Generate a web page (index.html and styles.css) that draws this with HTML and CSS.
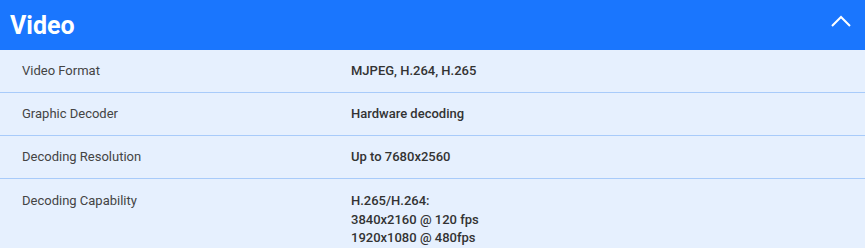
FILE: index.html
```html
<!DOCTYPE html>
<html lang="en">

<head>
    <meta charset="UTF-8">
    <title>Specifications - Video</title>
    <link rel="stylesheet" href="styles.css">
</head>

<body>
    <section class="spec">
        <div class="spec-header">
            <h2>Video</h2>
            <svg class="toggle" width="20" height="12" viewBox="0 0 20 12">
                <polyline points="1,11 10,2 19,11" fill="none" stroke="#fff" stroke-width="2" />
            </svg>
        </div>
        <div class="spec-row">
            <div class="spec-label">Video Format</div>
            <div class="spec-value">MJPEG, H.264, H.265</div>
        </div>
        <div class="spec-row">
            <div class="spec-label">Graphic Decoder</div>
            <div class="spec-value">Hardware decoding</div>
        </div>
        <div class="spec-row">
            <div class="spec-label">Decoding Resolution</div>
            <div class="spec-value">Up to 7680x2560</div>
        </div>
        <div class="spec-row last">
            <div class="spec-label">Decoding Capability</div>
            <div class="spec-value">H.265/H.264:<br>3840x2160 @ 120 fps<br>1920x1080 @ 480fps</div>
        </div>
    </section>
</body>

</html>
```

FILE: styles.css
```css
body {
    margin: 0;
    font-family: Roboto, "Open Sans", Arial, sans-serif;
    background-color: #e6f0fe;
}

.spec-header {
    background-color: #1a76fe;
    color: white;
    height: 50px;
    display: flex;
    align-items: center;
    justify-content: space-between;
    padding: 0 14px 0 10px;
}

.spec-header h2 {
    margin: 0;
    font-size: 25px;
    font-weight: 700;
}

.toggle {
    margin-top: -8px;
}

.spec-row {
    display: flex;
    border-bottom: 1px solid #a8cbfa;
    font-size: 13px;
    line-height: 18px;
    padding: 12px 0;
}

.spec-row.last {
    border-bottom: none;
    padding-top: 13px;
    line-height: 18.5px;
}

.spec-label {
    width: 329px;
    padding-left: 22px;
    color: #444;
}

.spec-value {
    color: #333;
    font-weight: 500;
}
```
